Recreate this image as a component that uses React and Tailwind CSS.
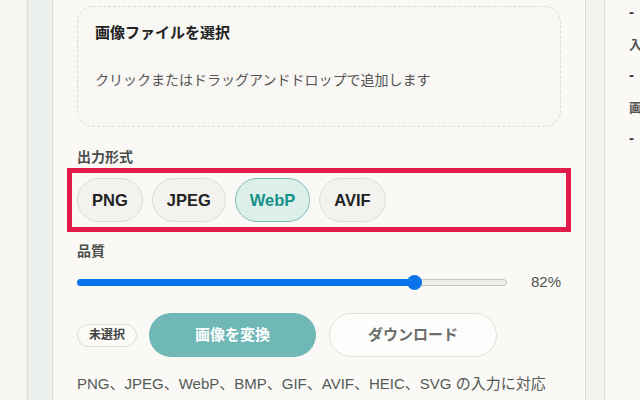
import React, { useState } from 'react'

const formats = ['PNG', 'JPEG', 'WebP', 'AVIF']

export default function App() {
  const [format, setFormat] = useState('WebP')
  const [quality] = useState(82)

  return (
    <div className="w-[640px] h-[400px] overflow-hidden flex bg-[#f6f5f0] text-[#333] font-['Liberation_Sans','Noto_Sans_CJK_JP',sans-serif]">
      {/* Left rails */}
      <div className="w-[28px] shrink-0 border-r border-[#dedcd6]" />
      <div className="w-[25px] shrink-0 bg-[#edf1ee] border-r border-[#dcdcd6]" />

      {/* Main card */}
      <main className="w-[532px] shrink-0 bg-[#faf9f5] px-[24px] pt-[6px] flex flex-col">
        {/* Drop zone */}
        <div className="h-[121px] rounded-[16px] border border-dashed border-[#dcdbd5] bg-[#f8f7f3] pl-[17px] pt-[16px]">
          <div className="text-[15px] leading-[20px] font-bold text-[#222]">画像ファイルを選択</div>
          <div className="mt-[27px] text-[14px] leading-[20px] text-[#555]">クリックまたはドラッグアンドドロップで追加します</div>
        </div>

        {/* Output format */}
        <div className="mt-[20px] text-[14px] leading-[20px] font-semibold text-[#4a4f4c]">出力形式</div>
        <div className="mt-[1px] -mx-[10px] border-[5px] border-[#e31b4b] p-[5px] flex gap-[9px]">
          {formats.map(f => (
            <button
              key={f}
              onClick={() => setFormat(f)}
              className={
                f === format
                  ? 'h-[44px] px-[14px] rounded-full border border-[#7dbfbb] bg-[#dcefea] text-[16.5px] font-bold text-[#17918b]'
                  : 'h-[44px] px-[14px] rounded-full border border-[#dddcd6] bg-[#f3f2ee] text-[16.5px] font-bold text-[#222]'
              }
            >
              {f}
            </button>
          ))}
        </div>

        {/* Quality */}
        <div className="mt-[9px] text-[14px] leading-[20px] font-semibold text-[#4a4f4c]">品質</div>
        <div className="mt-[11px] flex items-center gap-[24px]">
          <div className="relative flex-1 h-[15px] flex items-center">
            <div className="w-full h-[7px] rounded-full bg-[#eceeec] border border-[#c6c7c3]" />
            <div className="absolute left-0 h-[7px] w-[338px] rounded-full bg-[#0b74ea]" />
            <div className="absolute left-[330px] w-[15px] h-[15px] rounded-full bg-[#0b74ea]" />
          </div>
          <div className="text-[15px] leading-[20px] text-[#4d524f]">{quality}%</div>
        </div>

        {/* Actions */}
        <div className="mt-[21px] flex items-center gap-[12px]">
          <span className="h-[23px] px-[11px] rounded-full border border-[#dddcd6] bg-[#fbfaf7] text-[12px] font-bold text-[#444] flex items-center">未選択</span>
          <button className="h-[44px] w-[167px] rounded-full bg-[#6fb8b5] text-[15px] font-bold text-white">画像を変換</button>
          <button className="ml-[1px] h-[44px] w-[168px] rounded-full border border-[#e2e1dc] bg-[#fdfdfb] text-[15px] font-bold text-[#6b6e6c]">ダウンロード</button>
        </div>

        <p className="mt-[17px] text-[15px] leading-[20px] text-[#555a57] whitespace-nowrap">
          PNG、JPEG、WebP、BMP、GIF、AVIF、HEIC、SVG の入力に対応
        </p>
      </main>

      {/* Right rail */}
      <div className="w-[20px] shrink-0 bg-[#f2f2ee] border-x border-[#dcdcd6]" />

      {/* Side info */}
      <aside className="flex-1 bg-[#faf9f5] pl-[24px] overflow-hidden whitespace-nowrap">
        <div className="-mt-[1px] text-[15px] leading-[26px] font-bold text-[#333]">-</div>
        <div className="mt-[10px] text-[13px] leading-[20px] font-semibold text-[#555]">入力サイズ</div>
        <div className="mt-[7px] text-[15px] leading-[26px] font-bold text-[#333]">-</div>
        <div className="mt-[10px] text-[13px] leading-[20px] font-semibold text-[#555]">画像サイズ</div>
        <div className="mt-[7px] text-[15px] leading-[26px] font-bold text-[#333]">-</div>
      </aside>
    </div>
  )
}
